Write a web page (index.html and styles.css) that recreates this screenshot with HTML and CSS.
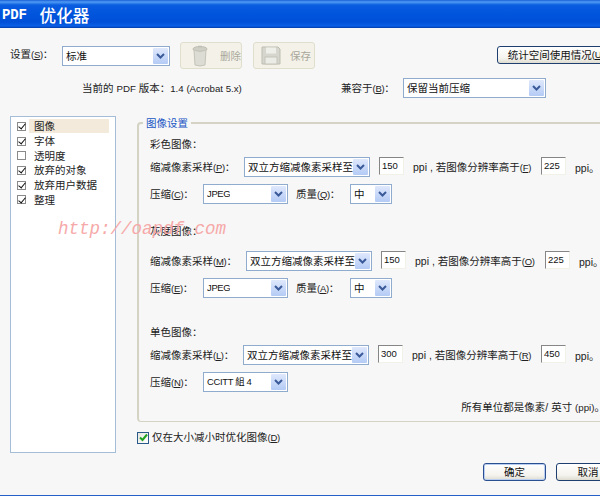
FILE: index.html
```html
<!DOCTYPE html>
<html lang="zh">
<head>
<meta charset="utf-8">
<title>PDF 优化器</title>
<link rel="stylesheet" href="styles.css">
</head>
<body>
<div class="dialog">
  <header class="titlebar"><span class="title-latin">PDF</span><span class="title-cjk">优化器</span></header>

  <div class="settings">
    <span class="lbl">设置<span class="key">(<u>S</u>)</span>：</span>
    <div class="select sel-preset"><span class="val">标准</span><span class="arrow"><svg width="9" height="6" viewBox="0 0 9 6"><path d="M1 1l3.5 3.5L8 1" fill="none" stroke="#3a5a9a" stroke-width="2"/></svg></span></div>
    <div class="tool-btn btn-del">
      <svg width="18" height="22" viewBox="0 0 18 22"><ellipse cx="9" cy="4" rx="7" ry="2.5" fill="#cfcfc6" stroke="#bdbdb2"/><path d="M3 5l1 15q5 2 10 0l1-15q-6 3-12 0z" fill="#dcdcd4" stroke="#c4c4ba"/><path d="M7 1.5h4" stroke="#bdbdb2" stroke-width="1.5"/></svg>
      <span>删除</span>
    </div>
    <div class="tool-btn btn-save">
      <svg width="20" height="19" viewBox="0 0 20 19"><path d="M1 1h16l2 2v15H1z" fill="#d6d6ce" stroke="#bdbdb2"/><rect x="5" y="1.5" width="10" height="6" fill="#efefe9"/><rect x="4" y="11" width="12" height="7" fill="#ecece6" stroke="#c4c4ba"/></svg>
      <span>保存</span>
    </div>
    <div class="btn btn-stats">统计空间使用情况<span class="key">(<u>U</u>)</span></div>
  </div>

  <div class="version-row">
    <span class="version">当前的 <span class="lat">PDF</span> 版本：<span class="lat">1.4 (Acrobat 5.x)</span></span>
    <span class="lbl compat-lbl">兼容于<span class="key">(<u>B</u>)</span>：</span>
    <div class="select sel-compat"><span class="val">保留当前压缩</span><span class="arrow"><svg width="9" height="6" viewBox="0 0 9 6"><path d="M1 1l3.5 3.5L8 1" fill="none" stroke="#3a5a9a" stroke-width="2"/></svg></span></div>
  </div>

  <div class="main">
    <ul class="panel-list">
      <li class="item selected"><span class="check on"></span><span class="item-text">图像</span></li>
      <li class="item"><span class="check on"></span><span class="item-text">字体</span></li>
      <li class="item"><span class="check"></span><span class="item-text">透明度</span></li>
      <li class="item"><span class="check on"></span><span class="item-text">放弃的对象</span></li>
      <li class="item"><span class="check on"></span><span class="item-text">放弃用户数据</span></li>
      <li class="item"><span class="check on"></span><span class="item-text">整理</span></li>
    </ul>

    <div class="right">
      <fieldset class="group">
        <legend>图像设置</legend>

        <div class="heading">彩色图像：</div>
        <div class="row row-first">
          <span class="lbl w-sample">缩减像素采样<span class="key">(<u>P</u>)</span>：</span>
          <div class="select sel-method"><span class="val">双立方缩减像素采样至</span><span class="arrow"><svg width="9" height="6" viewBox="0 0 9 6"><path d="M1 1l3.5 3.5L8 1" fill="none" stroke="#3a5a9a" stroke-width="2"/></svg></span></div>
          <div class="num">150</div>
          <span class="lbl ppi">ppi , 若图像分辨率高于<span class="key">(<u>F</u>)</span></span>
          <div class="num num-b">225</div>
          <span class="lbl ppi2">ppi。</span>
        </div>
        <div class="row">
          <span class="lbl w-comp">压缩<span class="key">(<u>C</u>)</span>：</span>
          <div class="select sel-comp"><span class="val lat-val">JPEG</span><span class="arrow"><svg width="9" height="6" viewBox="0 0 9 6"><path d="M1 1l3.5 3.5L8 1" fill="none" stroke="#3a5a9a" stroke-width="2"/></svg></span></div>
          <span class="lbl w-q">质量<span class="key">(<u>Q</u>)</span>：</span>
          <div class="select sel-q"><span class="val">中</span><span class="arrow"><svg width="9" height="6" viewBox="0 0 9 6"><path d="M1 1l3.5 3.5L8 1" fill="none" stroke="#3a5a9a" stroke-width="2"/></svg></span></div>
        </div>

        <div class="heading heading-gray">灰度图像：</div>
        <div class="row row-gray">
          <span class="lbl w-sample-g">缩减像素采样<span class="key">(<u>M</u>)</span>：</span>
          <div class="select sel-method"><span class="val">双立方缩减像素采样至</span><span class="arrow"><svg width="9" height="6" viewBox="0 0 9 6"><path d="M1 1l3.5 3.5L8 1" fill="none" stroke="#3a5a9a" stroke-width="2"/></svg></span></div>
          <div class="num">150</div>
          <span class="lbl ppi">ppi , 若图像分辨率高于<span class="key">(<u>O</u>)</span></span>
          <div class="num num-b-g">225</div>
          <span class="lbl ppi2">ppi。</span>
        </div>
        <div class="row">
          <span class="lbl w-comp">压缩<span class="key">(<u>E</u>)</span>：</span>
          <div class="select sel-comp"><span class="val lat-val">JPEG</span><span class="arrow"><svg width="9" height="6" viewBox="0 0 9 6"><path d="M1 1l3.5 3.5L8 1" fill="none" stroke="#3a5a9a" stroke-width="2"/></svg></span></div>
          <span class="lbl w-q">质量<span class="key">(<u>A</u>)</span>：</span>
          <div class="select sel-q"><span class="val">中</span><span class="arrow"><svg width="9" height="6" viewBox="0 0 9 6"><path d="M1 1l3.5 3.5L8 1" fill="none" stroke="#3a5a9a" stroke-width="2"/></svg></span></div>
        </div>

        <div class="heading heading-mono">单色图像：</div>
        <div class="row row-first">
          <span class="lbl w-sample-m">缩减像素采样<span class="key">(<u>L</u>)</span>：</span>
          <div class="select sel-method"><span class="val">双立方缩减像素采样至</span><span class="arrow"><svg width="9" height="6" viewBox="0 0 9 6"><path d="M1 1l3.5 3.5L8 1" fill="none" stroke="#3a5a9a" stroke-width="2"/></svg></span></div>
          <div class="num">300</div>
          <span class="lbl ppi">ppi , 若图像分辨率高于<span class="key">(<u>R</u>)</span></span>
          <div class="num num-b-m">450</div>
          <span class="lbl ppi2">ppi。</span>
        </div>
        <div class="row">
          <span class="lbl w-comp">压缩<span class="key">(<u>N</u>)</span>：</span>
          <div class="select sel-comp"><span class="val lat-val">CCITT 組 4</span><span class="arrow"><svg width="9" height="6" viewBox="0 0 9 6"><path d="M1 1l3.5 3.5L8 1" fill="none" stroke="#3a5a9a" stroke-width="2"/></svg></span></div>
        </div>

        <div class="note">所有单位都是像素/ 英寸 <span class="lat">(ppi)</span>。</div>
      </fieldset>

      <div class="only-row">
        <span class="xp-check"><svg width="9" height="9" viewBox="0 0 9 9"><path d="M1 4.5l2.5 2.5L8 1.5" fill="none" stroke="#21a121" stroke-width="2"/></svg></span>
        <span class="lbl">仅在大小减小时优化图像<span class="key">(<u>D</u>)</span></span>
      </div>
    </div>
  </div>

  <footer class="footer">
    <div class="btn btn-ok">确定</div>
    <div class="btn btn-cancel">取消</div>
  </footer>

  <div class="watermark">http://oapdf.com</div>
</div>
</body>
</html>
```

FILE: styles.css
```css
* { box-sizing: border-box; }
html, body { margin: 0; padding: 0; }
body {
  width: 600px;
  height: 496px;
  overflow: hidden;
  background: #f7f7f7;
  color: #222;
  font-family: "Liberation Sans", "Noto Sans CJK SC", sans-serif;
  font-size: 10.5px;
  line-height: 14px;
}
.dialog {
  position: relative;
  width: 600px;
  height: 496px;
  overflow: hidden;
  border-bottom: 1px solid #2560c8;
}
.titlebar {
  height: 28px;
  display: flex;
  align-items: center;
  gap: 13px;
  padding: 2px 0 0 2px;
  color: #fff;
  background: linear-gradient(#1a5fd8 0, #4f9bf5 2px, #0a5ce0 5px, #0055dc 14px, #0050d8 22px, #0a60e6 26px, #003caa 28px);
}
.title-latin { font: bold 14px/18px "Liberation Mono", monospace; letter-spacing: -0.2px; }
.title-cjk { font: 500 16.6px/18px "Noto Sans CJK SC", sans-serif; }

.lbl { white-space: nowrap; flex: none; }
.key { font-size: 9.5px; letter-spacing: -0.3px; }
.lat { font-size: 9.7px; }
.lat-val { font-size: 9.4px; letter-spacing: -0.3px; }
u { text-decoration: underline; }

.settings {
  display: flex;
  align-items: center;
  height: 27px;
  margin-top: 14px;
  padding-left: 10px;
}
.settings .lbl { width: 52px; margin-top: -2px; }
.select {
  display: flex;
  align-items: center;
  justify-content: space-between;
  flex: none;
  height: 20px;
  padding: 1px 1px 1px 3px;
  background: #fff;
  border: 1px solid #8fabce;
  color: #111;
}
.val { white-space: nowrap; overflow: hidden; }
.arrow {
  width: 15px;
  height: 16px;
  flex: none;
  display: flex;
  align-items: center;
  justify-content: center;
  background: linear-gradient(#dfe8fc, #b4cbf5);
  border-radius: 1px;
}
.sel-preset { width: 108px; }
.sel-compat { width: 143px; height: 20px; }
.sel-method { width: 126px; }
.sel-comp { width: 85px; }
.sel-q { width: 42px; }

.tool-btn {
  width: 62px;
  height: 27px;
  margin-left: 10px;
  display: flex;
  align-items: center;
  gap: 11px;
  padding-left: 10px;
  background: #f4f2e8;
  border: 1px solid #e0decd;
  border-radius: 3px;
  color: #a9a89c;
  flex: none;
}
.btn-save { margin-left: 11px; padding-left: 7px; gap: 9px; }

.btn {
  display: flex;
  align-items: center;
  justify-content: center;
  height: 18px;
  flex: none;
  background: linear-gradient(#fff, #f4f3ee 70%, #dedcd0);
  border: 1px solid #1f3f70;
  border-radius: 3px;
  color: #111;
  white-space: nowrap;
}
.btn-stats { width: 118px; margin: -1px -15px 0 auto; }

.version-row {
  display: flex;
  align-items: center;
  height: 20px;
  margin-top: 9px;
  padding-left: 82px;
}
.version { width: 259px; flex: none; white-space: nowrap; }
.compat-lbl { width: 62px; }

.main {
  display: flex;
  height: 337px;
  margin-top: 18px;
  padding-left: 10px;
}
.panel-list {
  list-style: none;
  margin: 0;
  padding: 2px 0 0 6px;
  width: 106px;
  flex: none;
  background: #fff;
  border: 1px solid #a6bdd8;
}
.item {
  display: flex;
  align-items: center;
  height: 14.7px;
  white-space: nowrap;
}
.item-text { padding-left: 5px; width: 80px; margin-left: 3px; }
.selected .item-text { background: #f3eadb; }
.check {
  position: relative;
  width: 9px;
  height: 9px;
  flex: none;
  background: #fff;
  border: 1px solid #8a8a8a;
}
.check.on::after {
  content: "";
  position: absolute;
  left: 1.5px;
  top: -0.5px;
  width: 3px;
  height: 6px;
  border: solid #111;
  border-width: 0 1.5px 1.5px 0;
  transform: rotate(40deg);
}
.right { margin-left: 21px; flex: none; width: 480px; }

.group {
  margin: 0;
  padding: 6px 0 0 11px;
  height: 306px;
  border: 1px solid #d5d4c4;
  border-width: 2px 1px 1px 2px;
  border-radius: 4px;
  min-width: 0;
}
.group legend {
  margin-left: -7px;
  padding: 0 3px;
  color: #1a56c4;
}
.heading { height: 14px; padding-top: 1px; }
.heading-gray { margin-top: 19px; }
.heading-mono { margin-top: 26px; }
.row {
  display: flex;
  align-items: center;
  height: 20px;
  margin-top: 7px;
}
.row .lbl { padding-top: 1px; }
.row-gray { margin-top: 14px; }
.w-sample { width: 94px; }
.w-sample-g { width: 96px; }
.w-sample-m { width: 93px; }
.w-comp { width: 53px; }
.w-q { width: 54px; margin-left: 8px; }

.num {
  width: 25px;
  height: 18px;
  margin: -2px 0 0 9px;
  padding: 1px 2px;
  flex: none;
  background: #fff;
  border: 1px solid;
  border-color: #868686 #f2f1e8 #f2f1e8 #868686;
  color: #111;
  font-size: 9.5px;
}
.ppi { margin-left: 9px; width: 128px; }
.num-b { margin-left: 0; }
.num-b-g { margin-left: 2px; }
.num-b-m { margin-left: 1px; }
.ppi2 { margin-left: 9px; }

.note {
  margin: 7px 0 0;
  height: 14px;
  width: 455px;
  padding-top: 1px;
  text-align: right;
  white-space: nowrap;
}
.only-row {
  display: flex;
  align-items: center;
  gap: 3px;
  margin-top: 8px;
}
.xp-check {
  width: 12px;
  height: 12px;
  display: flex;
  align-items: center;
  justify-content: center;
  background: linear-gradient(135deg, #e6e6de, #fff);
  border: 1px solid #2a5a8a;
}
.footer {
  display: flex;
  justify-content: flex-end;
  gap: 10px;
  margin-top: 10px;
  margin-right: -20px;
}
.btn-ok { width: 63px; }
.btn-cancel { width: 64px; }
.btn-ok { border-color: #2a4f90; box-shadow: inset 0 0 0 1px #b8cdf0; }
.watermark {
  position: absolute;
  left: 58px;
  top: 219px;
  font: italic 17.5px/20px "Liberation Mono", monospace;
  color: #f6a9a9;
  white-space: nowrap;
}
```
